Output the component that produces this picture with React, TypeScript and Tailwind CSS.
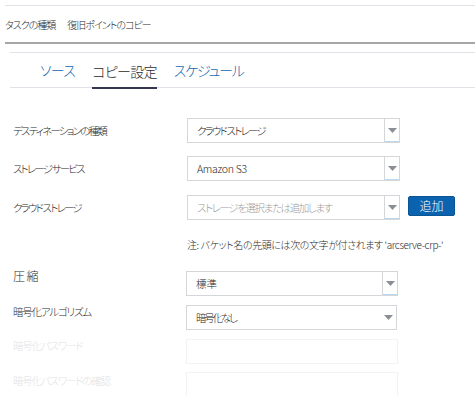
const jp = "[font-family:'Noto_Sans_CJK_JP','Liberation_Sans',sans-serif] [font-feature-settings:'palt']";
const txt = 'text-[10.5px] tracking-[-1.8px]';

function Arrow() {
  return (
    <svg width="9" height="5" viewBox="0 0 9 5">
      <path d="M0 0h9L4.5 5z" fill="#8a8f96" />
    </svg>
  );
}

function Select({ value, placeholder, split = true, w = 213, cls = '' }: { value?: string; placeholder?: string; split?: boolean; w?: number; cls?: string }) {
  return (
    <div className="flex h-[25px] border border-[#d4d6d9] bg-white" style={{ width: w }}>
      <div className={`flex-1 flex items-center pl-[9px] ${value ? 'text-[#222]' : 'text-[#9a9a9a] tracking-[-1.4px]'} ${cls}`}>
        {value ?? placeholder}
      </div>
      <div className={`w-[15px] flex items-center justify-center ${split ? 'border-l border-[#d4d6d9] shadow-[inset_0_-1px_0_#b9d8f3]' : ''}`}>
        <Arrow />
      </div>
    </div>
  );
}

export default function App() {
  return (
    <div className={`w-[475px] h-[396px] overflow-hidden bg-white text-[#2a2a2a] font-light ${jp}`}>
      <div className="pl-[5px] pt-[5px]">
        <div className="h-[37px] border-t border-[#dfe3e8] flex items-center text-[10px] tracking-[-1px]">
          <span>タスクの種類</span>
          <span className="ml-[12px]">復旧ポイントのコピー</span>
        </div>
        <div className="h-[2px] bg-[#a6a6a6]" />
        <div className="pl-[5px] pt-[8px]">
          <div className="h-[36px] border-t border-b border-[#dfe3e8] flex items-stretch pl-[30px] gap-[17px] text-[14px] tracking-[-0.7px]">
            <div className="flex items-center text-[#1667ad]">ソース</div>
            <div className="flex items-center text-[#2b2b2b] border-b-2 border-[#353650] pt-[2px] -mb-[2px]">コピー設定</div>
            <div className="flex items-center text-[#1667ad] tracking-[-1.2px]">スケジュール</div>
          </div>
        </div>
      </div>

      <div className={`pl-[13px] pt-[30px] ${txt}`}>
        <div className="flex items-center h-[25px]">
          <div className="w-[174px]">デスティネーションの種類</div>
          <Select value="クラウド ストレージ" />
        </div>
        <div className="flex items-center h-[25px] mt-[13px]">
          <div className="w-[174px]">ストレージ サービス</div>
          <Select value="Amazon S3" cls="tracking-[-0.3px]" />
        </div>
        <div className="flex items-center h-[25px] mt-[14px]">
          <div className="w-[174px]">クラウド ストレージ</div>
          <Select placeholder="ストレージを選択または追加します" />
          <button className="ml-[8px] -mt-[4px] w-[47px] h-[20px] bg-[#0b62ae] border border-[#0a5596] rounded-[2px] text-white text-[12px] tracking-normal flex items-center justify-center">追加</button>
        </div>
        <div className="pl-[174px] mt-[17px] h-[14px] flex items-center text-[10px] tracking-[-0.4px]">
          注: バケット名の先頭には次の文字が付されます 'arcserve-crp-'
        </div>
        <div className="flex items-start h-[25px] mt-[20px]">
          <div className="w-[173px] -mt-[4px] text-[12px] tracking-[1.5px]">圧縮</div>
          <Select value="標準" w={212} cls="tracking-[0px]" />
        </div>
        <div className="flex items-start h-[25px] mt-[9px]">
          <div className="w-[173px] -mt-[1px] tracking-[-1.2px]">暗号化アルゴリズム</div>
          <Select value="暗号化なし" split={false} w={211} cls="tracking-[-2.2px]" />
        </div>
        <div className="flex items-start h-[25px] mt-[9px] text-[#e2e2e2] tracking-[-1.2px]">
          <div className="w-[173px] -mt-[1px]">暗号化パスワード</div>
          <div className="w-[212px] h-[25px] border border-[#f3f3f3]" />
        </div>
        <div className="flex items-start h-[25px] mt-[8px] text-[#e2e2e2] tracking-[-1.2px]">
          <div className="w-[173px] pt-[1px]">暗号化パスワードの確認</div>
          <div className="w-[212px] h-[25px] border border-[#f3f3f3]" />
        </div>
      </div>
    </div>
  );
}
